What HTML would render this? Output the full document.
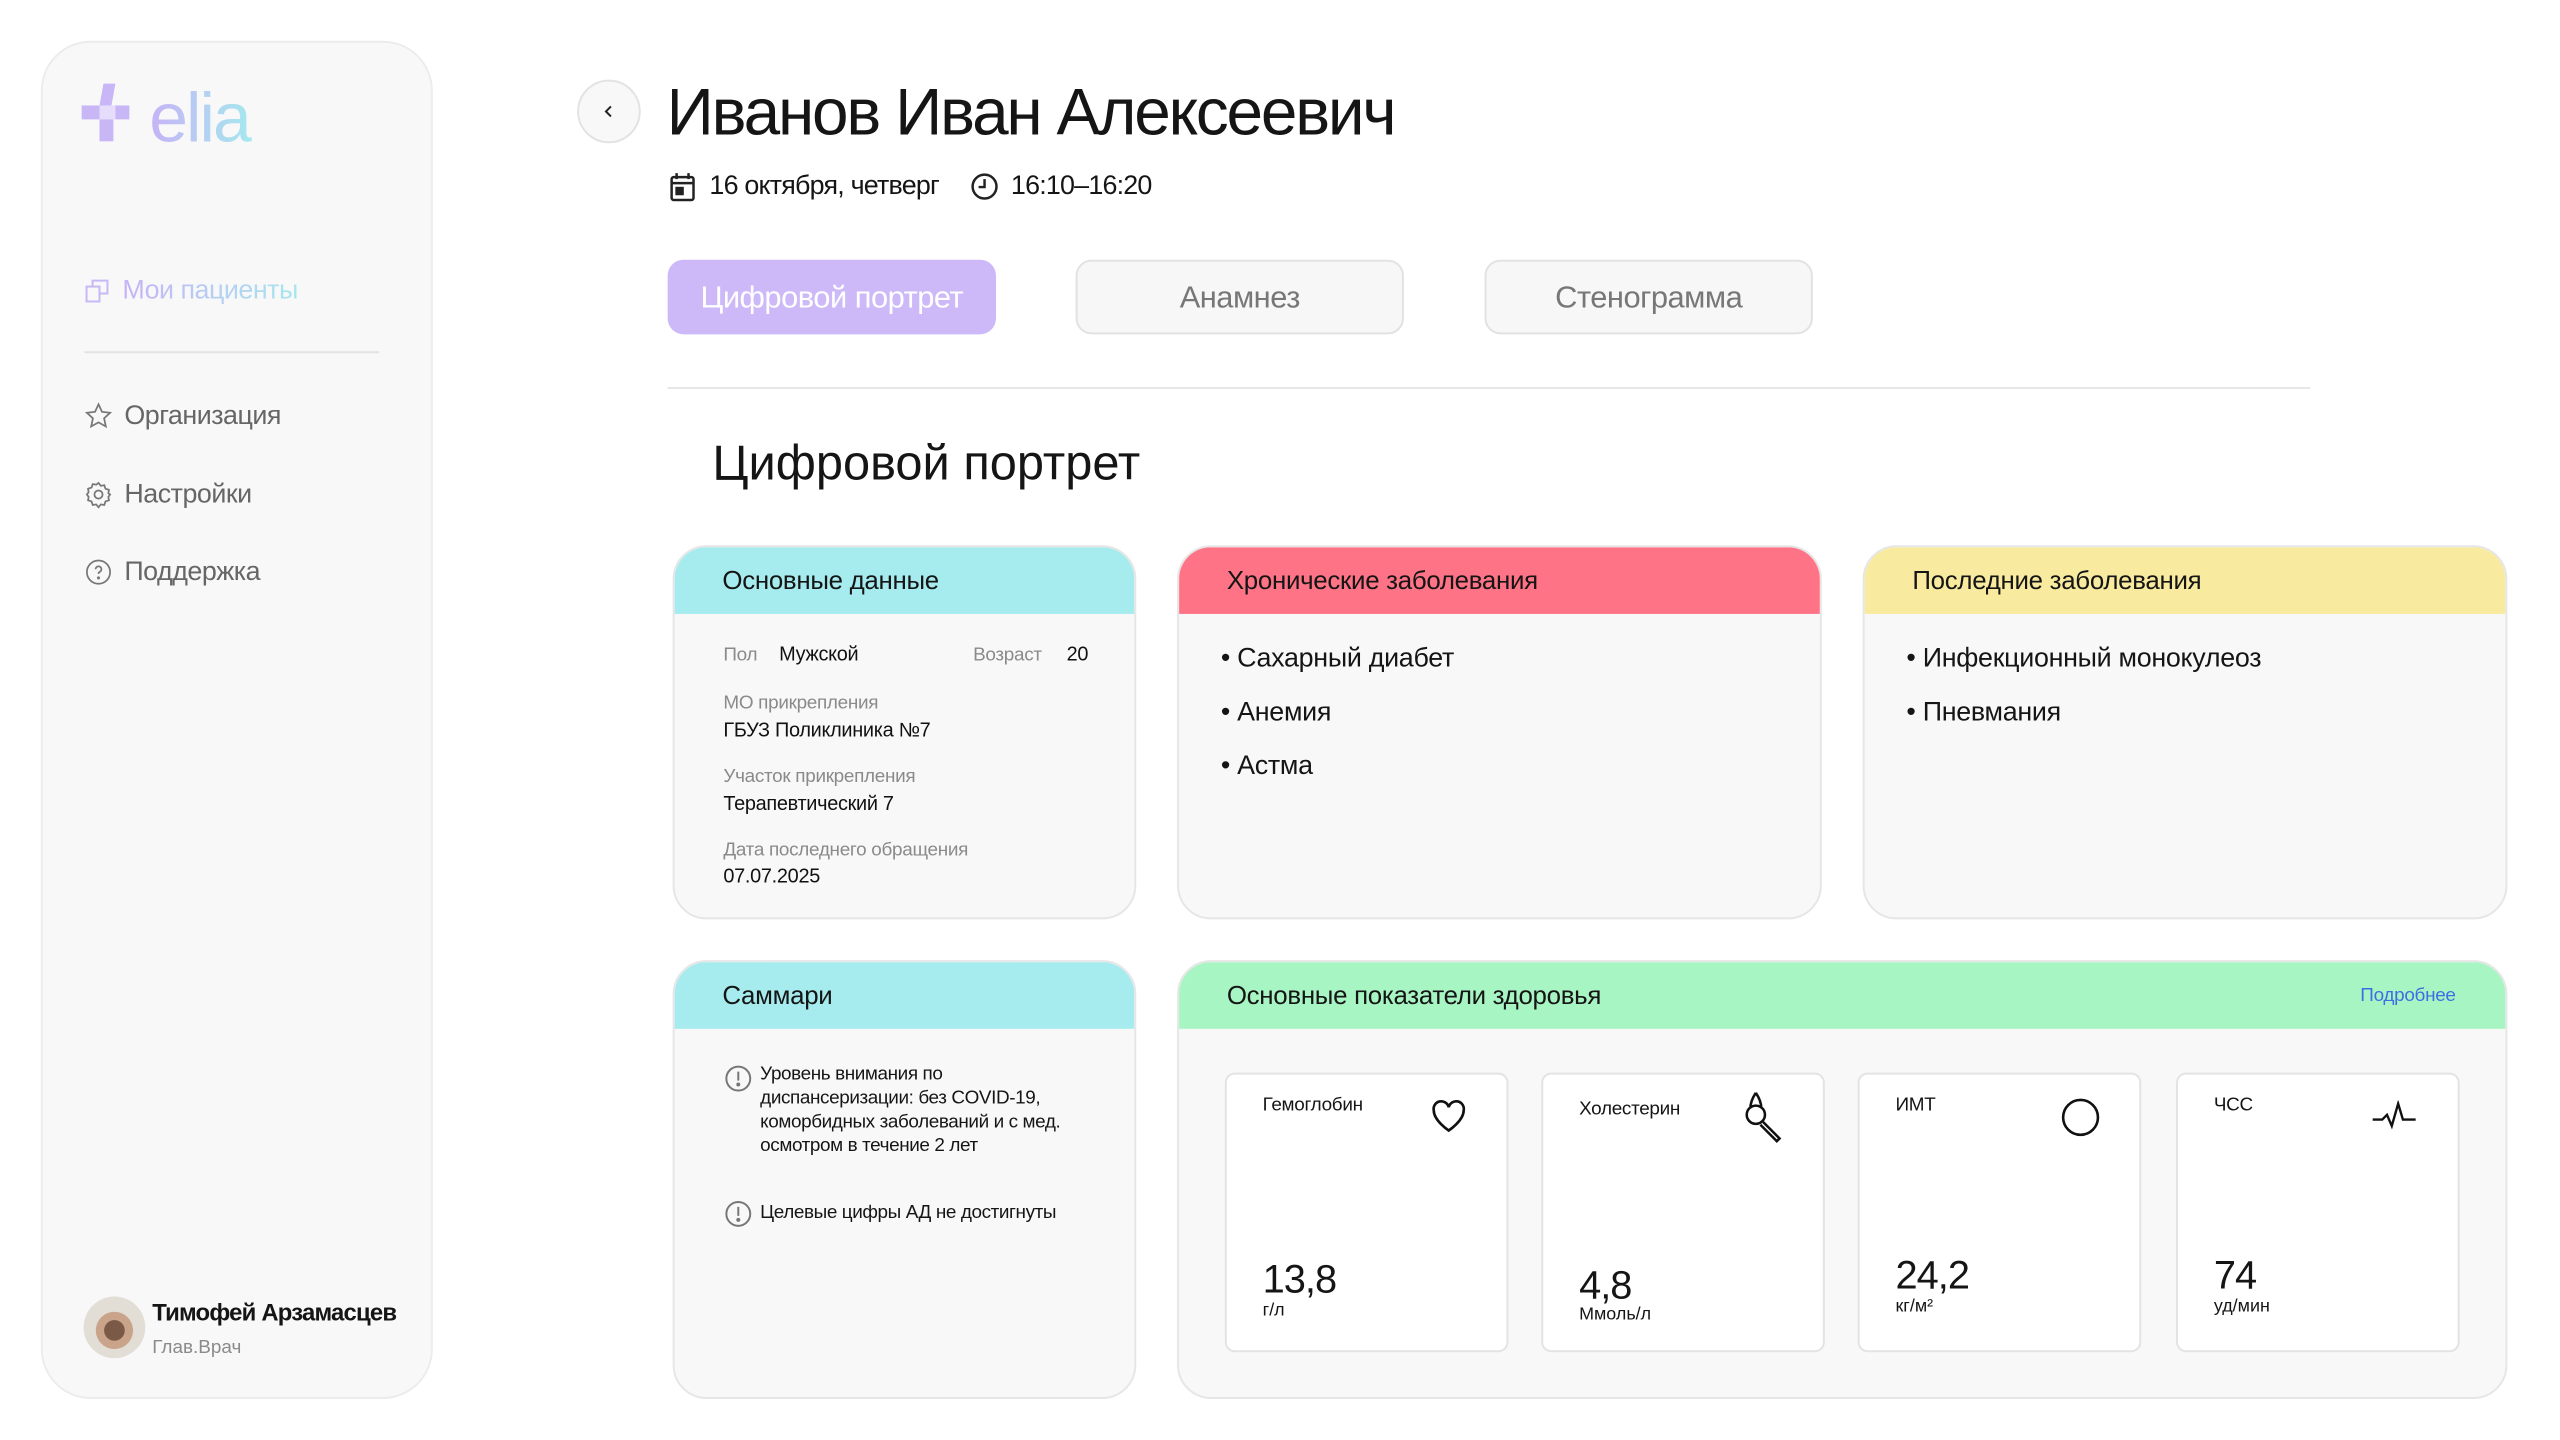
<!DOCTYPE html>
<html><head><meta charset="utf-8">
<style>
*{box-sizing:border-box;margin:0;padding:0}
body{width:2560px;height:1440px;background:#fff;font-family:"Liberation Sans",sans-serif;color:#151515;position:relative;overflow:hidden}
#w{position:absolute;left:0;top:0;width:2560px;height:1440px;transform:scale(0.995);transform-origin:0 0}
.abs{position:absolute}
.side{left:41px;top:41px;width:394px;height:1365px;background:#f8f8f8;border:2px solid #ececec;border-radius:50px}
.nav{font-size:27px;color:#666;display:flex;align-items:center;gap:12px;letter-spacing:-0.5px}
.tab{top:261px;height:75px;width:330px;border-radius:16px;font-size:31px;display:flex;align-items:center;justify-content:center;letter-spacing:-0.5px}
.card{background:#f8f8f8;border:2px solid #e6e6e6;border-radius:34px;overflow:hidden}
.hd{height:67px;display:flex;align-items:center;padding-left:48px;font-size:26px;letter-spacing:-0.3px}
.sm{font-size:19px;color:#8a8a8a;letter-spacing:-0.3px}
.vl{font-size:20px;color:#111;letter-spacing:-0.3px}
.bl{font-size:27px;letter-spacing:-0.3px}
.mc{top:1078px;width:285px;height:281px;background:#fff;border:2px solid #e3e3e3;border-radius:10px}
.mc .lb{position:absolute;left:36px;top:20px;font-size:19px;letter-spacing:-0.3px}
.mc .v{position:absolute;left:36px;top:184px;font-size:40px;letter-spacing:-1px}
.mc .u{position:absolute;left:36px;top:226px;font-size:18px}
.mc svg{position:absolute;right:38px;top:22px}
</style></head><body><div id="w">

<div class="abs side"></div>
<svg class="abs" style="left:82px;top:80px" width="200" height="66" viewBox="0 0 200 66">
<defs><linearGradient id="g" x1="0" x2="1"><stop offset="0" stop-color="#c6b3f7"/><stop offset="1" stop-color="#a5e9ee"/></linearGradient></defs>
<path d="M22 4 L34 4 L30 26 L18 26 Z" fill="#c9b6f7"/>
<rect x="0" y="26" width="18" height="14" fill="#c9b6f7"/>
<rect x="18" y="26" width="16" height="14" fill="#e6dcfb"/>
<rect x="34" y="26" width="14" height="14" fill="#c9b6f7"/>
<rect x="18" y="40" width="14" height="22" fill="#c9b6f7"/>
<text x="68" y="62" font-family="Liberation Sans" font-size="70" letter-spacing="-2" fill="url(#g)">elia</text>
</svg>

<div class="abs nav" style="left:85px;top:276px"><svg width="26" height="26" viewBox="0 0 26 26" fill="none" stroke="#c9b8f6" stroke-width="2"><rect x="2" y="9" width="13" height="15"/><path d="M8 9V3h15v13h-8"/></svg><span style="background:linear-gradient(90deg,#c6b3f7,#a6e6ee);-webkit-background-clip:text;color:transparent">Мои пациенты</span></div>
<div class="abs" style="left:85px;top:353px;width:296px;height:2px;background:#e2e2e2"></div>
<div class="abs nav" style="left:85px;top:402px"><svg width="28" height="28" viewBox="0 0 24 24" fill="none" stroke="#777" stroke-width="1.5"><path d="M12 2l3 6.5 7 .8-5.2 4.8 1.5 7L12 17.6 5.7 21.1l1.5-7L2 9.3l7-.8z"/></svg>Организация</div>
<div class="abs nav" style="left:85px;top:481px"><svg width="28" height="28" viewBox="0 0 24 24" fill="none" stroke="#777" stroke-width="1.5"><circle cx="12" cy="12" r="3.5"/><path d="M12 2l2 2.5 3-.5 1 3 3 1-.5 3L22 12l-1.5 2 .5 3-3 1-1 3-3-.5-2 2.5-2-2.5-3 .5-1-3-3-1 .5-3L2 12l1.5-2-.5-3 3-1 1-3 3 .5z"/></svg>Настройки</div>
<div class="abs nav" style="left:85px;top:559px"><svg width="28" height="28" viewBox="0 0 24 24" fill="none" stroke="#777" stroke-width="1.5"><circle cx="12" cy="12" r="10"/><path d="M9.5 9.5a2.5 2.5 0 1 1 3.5 2.3c-.7.3-1 .9-1 1.7"/><circle cx="12" cy="17" r=".6" fill="#777"/></svg>Поддержка</div>

<div class="abs" style="left:84px;top:1303px;width:62px;height:62px;border-radius:50%;background:radial-gradient(circle at 50% 55%,#7a5a47 0 22%,#c9a48a 23% 40%,#e2ddd5 41%)"></div>
<div class="abs" style="left:153px;top:1306px;font-size:24px;font-weight:bold;letter-spacing:-0.8px">Тимофей Арзамасцев</div>
<div class="abs" style="left:153px;top:1344px;font-size:19px;color:#8a8a8a">Глав.Врач</div>

<div class="abs" style="left:580px;top:80px;width:64px;height:64px;border-radius:50%;border:2px solid #e3e3e3;background:#f8f8f8;display:flex;align-items:center;justify-content:center"><svg width="14" height="18" viewBox="0 0 14 18"><path d="M9 4L4 9l5 5" stroke="#222" stroke-width="2" fill="none"/></svg></div>
<div class="abs" style="left:670px;top:72px;font-size:66px;letter-spacing:-2.2px;line-height:80px">Иванов Иван Алексеевич</div>
<svg class="abs" style="left:673px;top:173px" width="26" height="30" viewBox="0 0 26 30" fill="none" stroke="#222" stroke-width="2.5"><rect x="2" y="5" width="22" height="23" rx="2"/><path d="M7 1v6M19 1v6M2 11h22"/><rect x="7" y="16" width="6" height="6" fill="#222"/></svg>
<div class="abs" style="left:713px;top:171px;font-size:27px;letter-spacing:-0.8px">16 октября, четверг</div>
<svg class="abs" style="left:975px;top:173px" width="29" height="29" viewBox="0 0 29 29" fill="none" stroke="#222" stroke-width="2.5"><circle cx="14.5" cy="14.5" r="12"/><path d="M14.5 7v8h-6"/></svg>
<div class="abs" style="left:1016px;top:171px;font-size:27px;letter-spacing:-0.8px">16:10–16:20</div>

<div class="abs tab" style="left:671px;background:#cdb9f8;color:#fff">Цифровой портрет</div>
<div class="abs tab" style="left:1081px;background:#f7f7f7;border:2px solid #e2e2e2;color:#777">Анамнез</div>
<div class="abs tab" style="left:1492px;background:#f7f7f7;border:2px solid #e2e2e2;color:#777">Стенограмма</div>
<div class="abs" style="left:671px;top:389px;width:1651px;height:2px;background:#e6e6e6"></div>
<div class="abs" style="left:716px;top:438px;font-size:49px;letter-spacing:0">Цифровой портрет</div>

<div class="abs card" style="left:676px;top:548px;width:466px;height:376px">
<div class="hd" style="background:#a6ecee">Основные данные</div>
<div class="abs sm" style="left:49px;top:98px">Пол</div><div class="abs vl" style="left:105px;top:97px">Мужской</div>
<div class="abs sm" style="left:300px;top:98px">Возраст</div><div class="abs vl" style="left:394px;top:97px">20</div>
<div class="abs sm" style="left:49px;top:146px">МО прикрепления</div><div class="abs vl" style="left:49px;top:173px">ГБУЗ Поликлиника №7</div>
<div class="abs sm" style="left:49px;top:220px">Участок прикрепления</div><div class="abs vl" style="left:49px;top:247px">Терапевтический 7</div>
<div class="abs sm" style="left:49px;top:294px">Дата последнего обращения</div><div class="abs vl" style="left:49px;top:320px">07.07.2025</div>
</div>
<div class="abs card" style="left:1183px;top:548px;width:648px;height:376px">
<div class="hd" style="background:#ff7386">Хронические заболевания</div>
<div class="abs bl" style="left:42px;top:96px">• Сахарный диабет</div>
<div class="abs bl" style="left:42px;top:150px">• Анемия</div>
<div class="abs bl" style="left:42px;top:204px">• Астма</div>
</div>
<div class="abs card" style="left:1872px;top:548px;width:648px;height:376px">
<div class="hd" style="background:#f8eb9f">Последние заболевания</div>
<div class="abs bl" style="left:42px;top:96px">• Инфекционный монокулеоз</div>
<div class="abs bl" style="left:42px;top:150px">• Пневмания</div>
</div>

<div class="abs card" style="left:676px;top:965px;width:466px;height:441px">
<div class="hd" style="background:#a6ecee">Саммари</div>
<svg class="abs" style="left:50px;top:103px" width="28" height="28" viewBox="0 0 28 28" fill="none" stroke="#777" stroke-width="2"><circle cx="14" cy="14" r="12"/><path d="M14 7v9"/><circle cx="14" cy="20" r="1" fill="#777"/></svg>
<div class="abs" style="left:86px;top:101px;font-size:19px;line-height:24px;letter-spacing:-0.4px;width:340px">Уровень внимания по диспансеризации: без COVID-19, коморбидных заболеваний и с мед. осмотром в течение 2 лет</div>
<svg class="abs" style="left:50px;top:239px" width="28" height="28" viewBox="0 0 28 28" fill="none" stroke="#777" stroke-width="2"><circle cx="14" cy="14" r="12"/><path d="M14 7v9"/><circle cx="14" cy="20" r="1" fill="#777"/></svg>
<div class="abs" style="left:86px;top:241px;font-size:19px;letter-spacing:-0.4px">Целевые цифры АД не достигнуты</div>
</div>
<div class="abs card" style="left:1183px;top:965px;width:1337px;height:441px">
<div class="hd" style="background:#a8f5c4">Основные показатели здоровья<span style="position:absolute;right:50px;font-size:19px;color:#3e6fe2">Подробнее</span></div>
</div>
<div class="abs mc" style="left:1231px"><div class="lb">Гемоглобин</div>
<svg width="40" height="40" viewBox="0 0 24 24" fill="none" stroke="#111" stroke-width="1.6"><path d="M12 20.5S3 14.5 3 8.5A4.5 4.5 0 0 1 12 6.5 4.5 4.5 0 0 1 21 8.5c0 6-9 12-9 12z"/></svg>
<div class="v">13,8</div><div class="u">г/л</div></div>
<div class="abs mc" style="left:1549px"><div class="lb" style="top:24px">Холестерин</div>
<svg width="44" height="60" viewBox="0 0 24 32" fill="none" stroke="#111" stroke-width="1.4" style="top:14px"><path d="M8 2c-2 3-3 6-3 8.5M8 2c2 3 3 6 3 8.5"/><circle cx="8" cy="14" r="5"/><path d="M12 18l9 9-1.5 1.5-9-9"/></svg>
<div class="v" style="top:190px">4,8</div><div class="u" style="top:230px">Ммоль/л</div></div>
<div class="abs mc" style="left:1867px"><div class="lb">ИМТ</div>
<svg width="42" height="42" viewBox="0 0 24 24" fill="none" stroke="#111" stroke-width="1.5"><circle cx="12" cy="12" r="10"/></svg>
<div class="v" style="top:180px">24,2</div><div class="u" style="top:222px">кг/м²</div></div>
<div class="abs mc" style="left:2187px"><div class="lb">ЧСС</div>
<svg width="50" height="32" viewBox="0 0 30 20" fill="none" stroke="#111" stroke-width="1.5" style="top:26px"><path d="M1 12h6l3-3 3 7 4-14 3 10h8"/></svg>
<div class="v" style="top:180px">74</div><div class="u" style="top:222px">уд/мин</div></div>

</div></body></html>
